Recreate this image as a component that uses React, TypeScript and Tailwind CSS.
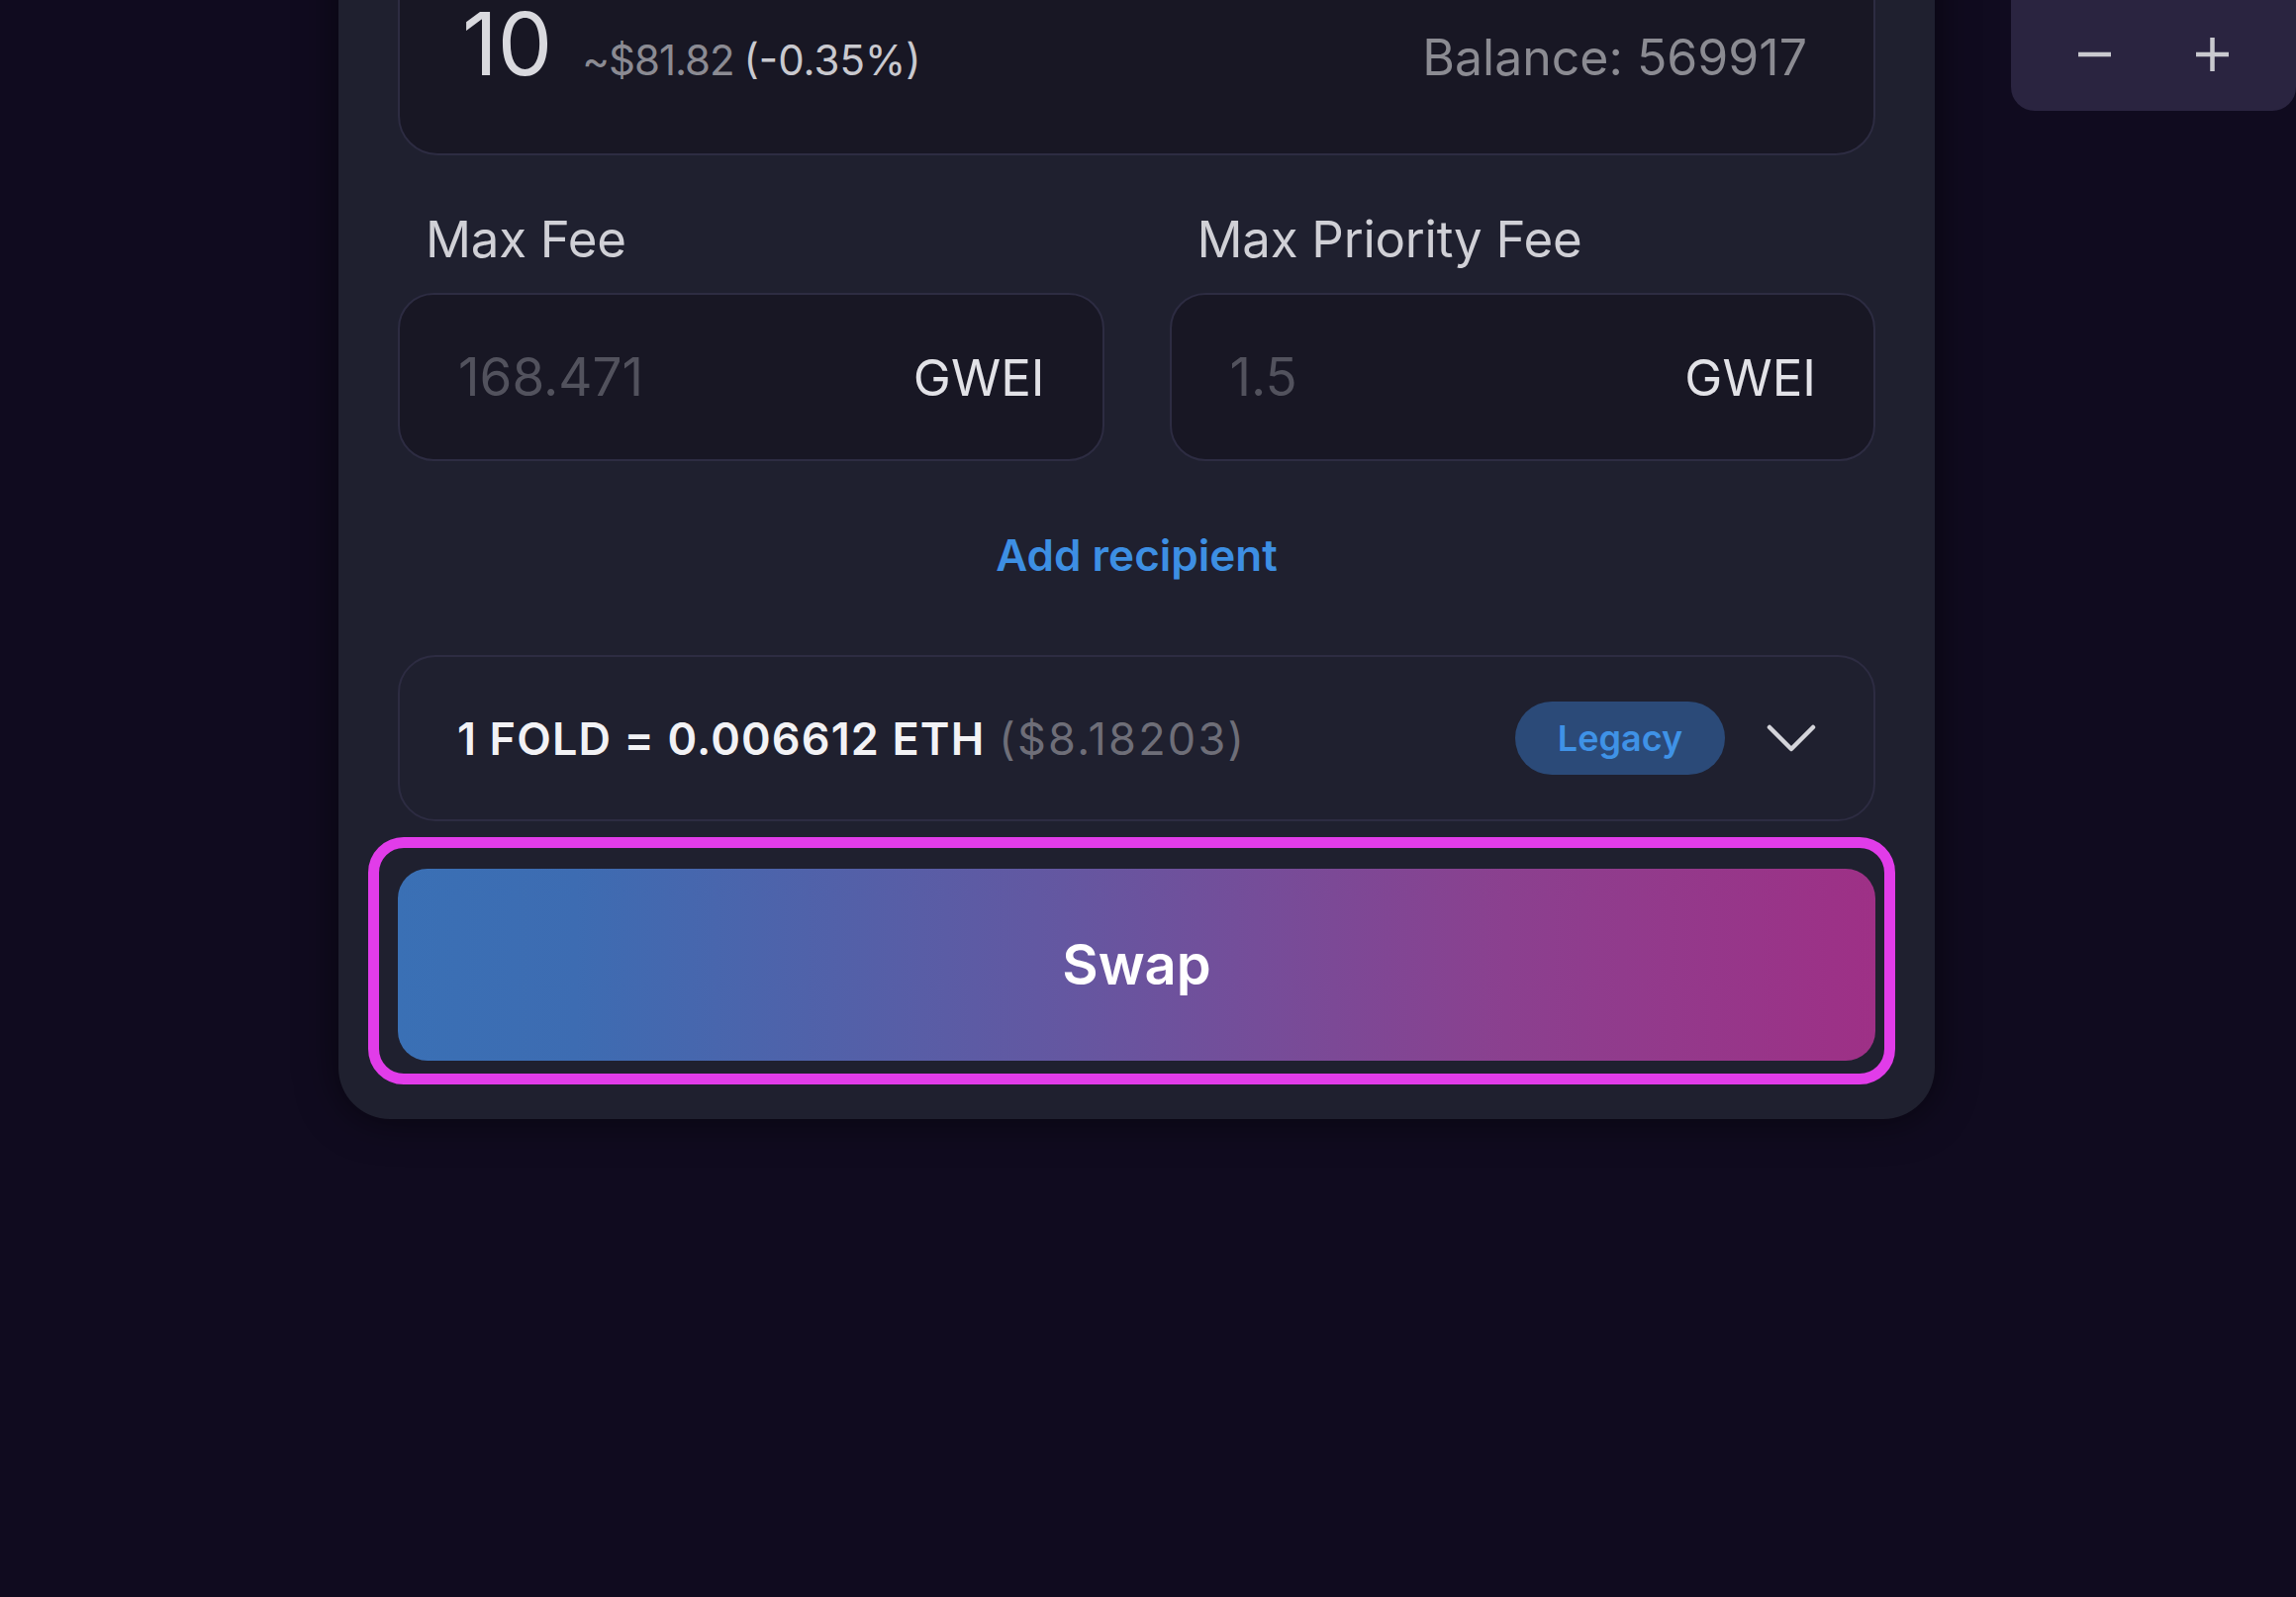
export default function App() {
  return (
    <div
      className="relative min-h-screen overflow-hidden bg-[#100b1f]"
      style={{ fontFamily: 'Inter, "Noto Sans", sans-serif' }}
    >
      {/* zoom control */}
      <div className="absolute right-0 top-[-30px] flex h-[142px] w-[288px] items-end gap-[85px] rounded-[24px] bg-[#2a2440] pb-[40px] pl-[68px]">
        <svg width="34" height="34" viewBox="0 0 34 34">
          <path d="M0 17h33" stroke="#c9c9cf" strokeWidth="4.5" />
        </svg>
        <svg width="34" height="34" viewBox="0 0 34 34">
          <path d="M0 17h33M16.5 0v34" stroke="#c9c9cf" strokeWidth="4.5" />
        </svg>
      </div>

      {/* swap card */}
      <div className="ml-[342px] mt-[-163px] w-[1613px] rounded-[52px] bg-[#1f202f] px-[60px] pb-[59px] pt-[60px] shadow-[0_0_40px_rgba(0,0,0,0.55)]">
        {/* amount box */}
        <div className="flex h-[260px] items-end rounded-[40px] border-2 border-[#2d2c42] bg-[#181724] pb-[67px] pl-[63px] pr-[67px]">
          <div className="flex w-full items-baseline">
            <span className="text-[88px] leading-none text-[#d9d9de]">10</span>
            <span className="ml-[30px] text-[42px] leading-none tracking-tight text-[#8b8b93]">~$81.82</span>
            <span className="ml-[10px] text-[42px] leading-none text-[#c9c9cf]">(-0.35%)</span>
            <span className="ml-auto text-[50px] leading-none text-[#8b8b92]">Balance: 569917</span>
          </div>
        </div>

        {/* fees */}
        <div className="mt-[59px] grid grid-cols-2 gap-x-[66px]">
          {[
            { label: 'Max Fee', value: '168.471' },
            { label: 'Max Priority Fee', value: '1.5' },
          ].map((f) => (
            <div key={f.label} className="flex flex-col">
              <span className="pl-[28px] text-[51px] leading-none tracking-[-0.005em] text-[#d0d0d6]">{f.label}</span>
              <div className="mt-[29px] flex h-[170px] items-center justify-between rounded-[36px] border-2 border-[#2d2c42] bg-[#181724] pl-[59px] pr-[58px]">
                <span className="text-[53px] leading-none text-[#52525d]">{f.value}</span>
                <span className="text-[51px] leading-none text-[#e2e2e7]">GWEI</span>
              </div>
            </div>
          ))}
        </div>

        <div className="mb-[79px] mt-[73px] text-center text-[44px] font-semibold leading-none text-[#3d8fe3]">
          Add recipient
        </div>

        {/* rate */}
        <div className="flex h-[168px] items-center rounded-[38px] border-2 border-[#2d2c42] bg-[#1f202f] pl-[58px] pr-[58px]">
          <span className="text-[45px] font-semibold leading-none tracking-[0.025em] text-[#f2f2f5]">
            1 FOLD = 0.006612 ETH
          </span>
          <span className="ml-[14px] text-[45px] leading-none tracking-[0.05em] text-[#6e6e78]">($8.18203)</span>
          <span className="ml-auto flex h-[74px] w-[212px] items-center justify-center rounded-full bg-[#2b4a78] text-[36px] font-semibold text-[#3f92e6]">
            Legacy
          </span>
          <svg className="ml-[42px]" width="50" height="28" viewBox="0 0 50 28">
            <path
              d="M3 3l22 22L47 3"
              fill="none"
              stroke="#d4d4da"
              strokeWidth="4.5"
              strokeLinecap="round"
              strokeLinejoin="round"
            />
          </svg>
        </div>

        {/* swap button */}
        <div className="relative mt-[48px]">
          <button className="flex h-[194px] w-full items-center justify-center rounded-[30px] bg-[linear-gradient(90deg,#3a70b5_0%,#3d6cb2_12%,#6457a1_45%,#8b408f_75%,#9e3086_100%)] text-[56px] font-semibold text-white">
            Swap
          </button>
          <div className="pointer-events-none absolute bottom-[-24px] left-[-30px] right-[-20px] top-[-32px] rounded-[36px] border-[11px] border-[#e13ce9]" />
        </div>
      </div>
    </div>
  );
}
